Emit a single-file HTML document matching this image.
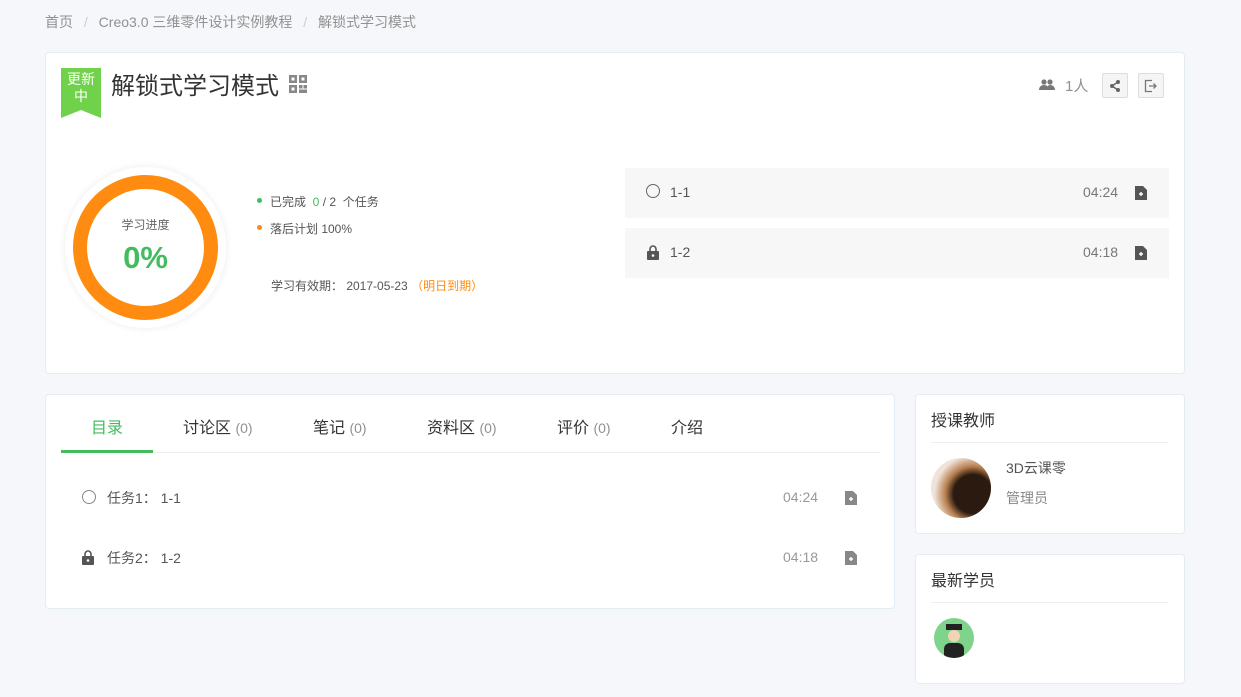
<!DOCTYPE html>
<html><head><meta charset="utf-8"><style>
*{margin:0;padding:0;box-sizing:border-box}
body{width:1241px;height:697px;background:#f5f7fa;font-family:"Liberation Sans","Noto Sans CJK SC",sans-serif;color:#333;position:relative;overflow:hidden;font-size:14px}
.a{position:absolute}
.card{position:absolute;background:#fff;border:1px solid #e4ecf3;border-radius:4px}
.g{color:#919191}
</style></head><body>
<div class="a" style="left:45px;top:12px;font-size:14px;color:#919191;white-space:nowrap">首页 <span style="color:#ccc;margin:0 7px">/</span> Creo3.0 三维零件设计实例教程 <span style="color:#ccc;margin:0 7px">/</span> 解锁式学习模式</div>

<div class="card" style="left:45px;top:52px;width:1140px;height:322px"></div>
<svg class="a" style="left:61px;top:68px" width="40" height="50"><polygon points="0,0 40,0 40,50 20,42 0,50" fill="#70d14a"/></svg>
<div class="a" style="left:61px;top:71px;width:40px;text-align:center;color:#fff;font-size:14px;line-height:17px">更新<br>中</div>
<div class="a" style="left:111px;top:66px;font-size:24px;color:#333">解锁式学习模式</div>
<svg class="a" style="left:289px;top:75px" width="18" height="19" fill="#888"><rect x="0" y="0" width="8" height="8"/><rect x="2.5" y="2.5" width="3" height="3" fill="#fff"/><rect x="10" y="0" width="8" height="8"/><rect x="12.5" y="2.5" width="3" height="3" fill="#fff"/><rect x="0" y="10" width="8" height="8"/><rect x="2.5" y="12.5" width="3" height="3" fill="#fff"/><rect x="10" y="10" width="3.5" height="3.5"/><rect x="14.5" y="10" width="3.5" height="3.5"/><rect x="10" y="14.5" width="8" height="3.5"/></svg>
<svg class="a" style="left:1039px;top:79px" width="16" height="12" fill="#777"><circle cx="5" cy="3" r="2.6"/><circle cx="11" cy="3" r="2.6"/><path d="M0 11c0-3 2-5 5-5s5 2 5 5zM8 11c0-3 1-5 3-5 3 0 5 2 5 5z"/></svg>
<div class="a g" style="left:1065px;top:75px;font-size:15px">1人</div>
<div class="a" style="left:1102px;top:73px;width:26px;height:25px;border:1px solid #ddd;border-radius:2px;background:#f5f5f5"></div>
<svg class="a" style="left:1108px;top:79px" width="14" height="14" fill="#666" stroke="#666" stroke-width="1.5"><line x1="4" y1="7" x2="10" y2="3"/><line x1="4" y1="7" x2="10" y2="11"/><circle cx="4" cy="7" r="2" stroke="none"/><circle cx="10" cy="3" r="2" stroke="none"/><circle cx="10" cy="11" r="2" stroke="none"/></svg>
<div class="a" style="left:1138px;top:73px;width:26px;height:25px;border:1px solid #ddd;border-radius:2px;background:#f5f5f5"></div>
<svg class="a" style="left:1144px;top:79px" width="14" height="14" fill="none" stroke="#777" stroke-width="1.3"><path d="M8 1.5H1.5v11H8M5 7h7M9.5 4.5 12 7l-2.5 2.5"/></svg>

<div class="a" style="left:65px;top:167px;width:161px;height:161px;border-radius:50%;background:#fff;box-shadow:0 0 8px rgba(0,0,0,.08)"></div>
<div class="a" style="left:73px;top:175px;width:145px;height:145px;border-radius:50%;border:14px solid #ff8c10"></div>
<div class="a" style="left:73px;top:216px;width:145px;text-align:center;font-size:12px;color:#666">学习进度</div>
<div class="a" style="left:73px;top:240px;width:145px;text-align:center;font-size:31px;font-weight:bold;color:#43bc60">0%</div>
<div class="a" style="left:257px;top:198px;width:5px;height:5px;border-radius:50%;background:#43bc60"></div>
<div class="a" style="left:270px;top:193px;font-size:12px;color:#555">已完成 &nbsp;<span style="color:#43bc60">0</span> / 2 &nbsp;个任务</div>
<div class="a" style="left:257px;top:225px;width:5px;height:5px;border-radius:50%;background:#ff8c10"></div>
<div class="a" style="left:270px;top:220px;font-size:12px;color:#555">落后计划 100%</div>
<div class="a" style="left:271px;top:277px;font-size:12px;color:#555">学习有效期： 2017-05-23 <span style="color:#ff8c10">（明日到期）</span></div>

<div class="a" style="left:625px;top:168px;width:544px;height:50px;background:#f7f7f7"></div>
<div class="a" style="left:625px;top:228px;width:544px;height:50px;background:#f7f7f7"></div>
<div class="a" style="left:646px;top:184px;width:14px;height:14px;border:1.3px solid #666;border-radius:50%"></div>
<div class="a" style="left:670px;top:184px;color:#555">1-1</div>
<div class="a" style="left:1083px;top:184px;color:#777">04:24</div>
<svg class="a" style="left:647px;top:245px" width="12" height="15" fill="#555"><path d="M3 6V4a3 3 0 016 0v2" fill="none" stroke="#555" stroke-width="1.6"/><rect x="0" y="6" width="12" height="9" rx="1"/><circle cx="6" cy="10.5" r="1.3" fill="#fff"/></svg>
<div class="a" style="left:670px;top:244px;color:#555">1-2</div>
<div class="a" style="left:1083px;top:244px;color:#777">04:18</div>
<svg class="a" style="left:1135px;top:186px" width="12" height="14" fill="#555"><path d="M0 0h8l4 4v10H0z"/><path d="M4 8h4M6 6v4" stroke="#fff" stroke-width="1.4"/></svg>
<svg class="a" style="left:1135px;top:246px" width="12" height="14" fill="#555"><path d="M0 0h8l4 4v10H0z"/><path d="M4 8h4M6 6v4" stroke="#fff" stroke-width="1.4"/></svg>

<div class="card" style="left:45px;top:394px;width:850px;height:215px"></div>
<div class="a" style="left:61px;top:452px;width:819px;height:1px;background:#eee"></div>
<div class="a" style="left:61px;top:450px;width:92px;height:3px;background:#43bc60"></div>
<div class="a" style="left:91px;top:414px;font-size:16px;color:#43bc60">目录</div>
<div class="a" style="left:183px;top:414px;font-size:16px">讨论区 <span class="g" style="font-size:14px">(0)</span></div>
<div class="a" style="left:313px;top:414px;font-size:16px">笔记 <span class="g" style="font-size:14px">(0)</span></div>
<div class="a" style="left:427px;top:414px;font-size:16px">资料区 <span class="g" style="font-size:14px">(0)</span></div>
<div class="a" style="left:557px;top:414px;font-size:16px">评价 <span class="g" style="font-size:14px">(0)</span></div>
<div class="a" style="left:671px;top:414px;font-size:16px">介绍</div>
<div class="a" style="left:82px;top:490px;width:14px;height:14px;border:1.3px solid #888;border-radius:50%"></div>
<div class="a" style="left:107px;top:488px;color:#555">任务1： 1-1</div>
<svg class="a" style="left:82px;top:550px" width="12" height="15" fill="#555"><path d="M3 6V4a3 3 0 016 0v2" fill="none" stroke="#555" stroke-width="1.6"/><rect x="0" y="6" width="12" height="9" rx="1"/><circle cx="6" cy="10.5" r="1.3" fill="#fff"/></svg>
<div class="a" style="left:107px;top:548px;color:#555">任务2： 1-2</div>
<div class="a" style="left:783px;top:489px;color:#999">04:24</div>
<div class="a" style="left:783px;top:549px;color:#999">04:18</div>
<svg class="a" style="left:845px;top:491px" width="12" height="14" fill="#888"><path d="M0 0h8l4 4v10H0z"/><path d="M4 8h4M6 6v4" stroke="#fff" stroke-width="1.4"/></svg>
<svg class="a" style="left:845px;top:551px" width="12" height="14" fill="#888"><path d="M0 0h8l4 4v10H0z"/><path d="M4 8h4M6 6v4" stroke="#fff" stroke-width="1.4"/></svg>

<div class="card" style="left:915px;top:394px;width:270px;height:140px"></div>
<div class="a" style="left:931px;top:407px;font-size:16px">授课教师</div>
<div class="a" style="left:931px;top:442px;width:237px;height:1px;background:#eee"></div>
<div class="a" style="left:931px;top:458px;width:60px;height:60px;border-radius:50%;background:radial-gradient(circle at 70% 60%,#2a1a10 0 35%,#b88050 50%,#f0e4da 70%)"></div>
<div class="a" style="left:1006px;top:458px;font-size:14px;color:#555">3D云课零</div>
<div class="a" style="left:1006px;top:488px;font-size:14px;color:#888">管理员</div>

<div class="card" style="left:915px;top:554px;width:270px;height:130px"></div>
<div class="a" style="left:931px;top:567px;font-size:16px">最新学员</div>
<div class="a" style="left:931px;top:602px;width:237px;height:1px;background:#eee"></div>
<div class="a" style="left:934px;top:618px;width:40px;height:40px;border-radius:50%;background:#7fd48c;overflow:hidden"><div class="a" style="left:12px;top:6px;width:16px;height:6px;background:#222"></div><div class="a" style="left:14px;top:12px;width:12px;height:12px;border-radius:50%;background:#f1d3b6"></div><div class="a" style="left:10px;top:25px;width:20px;height:16px;background:#222;border-radius:6px 6px 0 0"></div></div>
</body></html>
